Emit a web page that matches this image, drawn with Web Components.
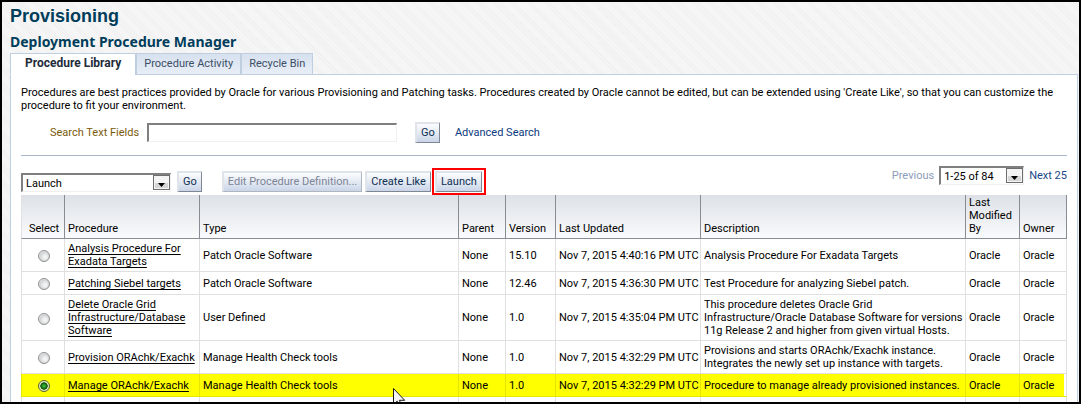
<!DOCTYPE html>
<html lang="en">
<head>
<meta charset="utf-8">
<title>Provisioning</title>
<style>
html, body { height: 100%; margin: 0; }
body { font: 11px/13px Roboto, "Liberation Sans", sans-serif; color: #000; }
</style>
</head>
<body>
<provisioning-page>
  <tab-strip slot="tabs" tabs="Procedure Library|Procedure Activity|Recycle Bin"></tab-strip>
  <search-bar slot="content"></search-bar>
  <action-bar slot="content"></action-bar>
  <procedure-table slot="content"></procedure-table>
</provisioning-page>

<template id="page">
<style>
:host { display: block; box-sizing: border-box; height: 100vh; overflow: hidden; border: 2px solid #000; position: relative;
  background: repeating-linear-gradient(45deg, #f0f0f0 0 1px, #f8f8f8 1px 2px); }
main { display: flex; flex-direction: column; min-height: 100%; box-sizing: border-box; padding: 3px 0 0 8px; }
h1 { margin: 0; font: bold 18px/22px "Liberation Sans", sans-serif; color: #003d5b; }
h2 { margin: 6px 0 2px; font: bold 14px/18px "Noto Sans", sans-serif; color: #003d5b; }
.panel { flex: 1; background: #fff; border: solid #c0cfe0; border-width: 0 1px; padding: 11px 10px 0; margin-right: 1px; }
p { margin: 0 0 10px; }
svg { position: absolute; left: 391px; top: 386px; }
</style>
<main>
  <h1>Provisioning</h1>
  <h2>Deployment Procedure Manager</h2>
  <slot name="tabs"></slot>
  <div class="panel">
    <p>Procedures are best practices provided by Oracle for various Provisioning and Patching tasks. Procedures created by Oracle cannot be edited, but can be extended using 'Create Like', so that you can customize the procedure to fit your environment.</p>
    <slot name="content"></slot>
  </div>
</main>
<svg width="13" height="20" viewBox="0 0 13 20" aria-hidden="true"><path d="M.5.5v16.2l3.7-3.6 2.5 5.8 2.2-1-2.5-5.600h5.300z" fill="#f4f4f8" stroke="#1a1a1a"/></svg>
</template>

<template id="tabs">
<style>
:host { display: block; }
nav { display: flex; border-bottom: 1px solid #c0cfe0; margin-right: 1px; }
a { box-sizing: border-box; height: 22px; line-height: 19px; padding: 0 7px; border: solid #c0cfe0; border-width: 1px 0 1px 2px;
  margin-bottom: -1px; text-align: center; color: #3c4f66; text-decoration: none;
  background: linear-gradient(#d7e1ef, #e8eef7); }
a:last-child { border-right-width: 1px; }
a.on { border-left-width: 1px; border-bottom-color: #fff; padding: 0 14px; font-size: 12px; font-weight: bold; color: #222c3a; background: #fff; }
</style>
<nav></nav>
</template>

<template id="button">
<style>
:host { display: inline-flex; }
button { height: 21px; box-sizing: border-box; padding: 0 4px; font: 11px/16px Roboto, sans-serif; white-space: nowrap; color: #0d2f52; border-radius: 0;
  border: solid; border-width: 2px; border-color: #dfe3ea #7f8794 #7f8794 #dfe3ea; border-right-width: 1px; border-bottom-width: 1px;
  background: linear-gradient(#fbfcfe, #dfe6f1 60%, #c9d4e8); }
button:disabled { color: #7d8496; border-color: #dfe3ea #b0b6c0 #b0b6c0 #dfe3ea; }
</style>
<button type="button"><slot></slot></button>
</template>

<template id="select">
<style>
:host { display: inline-grid; align-items: center; }
select, svg { grid-area: 1 / 1; }
select { appearance: none; width: 100%; height: 19px; box-sizing: border-box; margin: 0; padding: 0 20px 0 3px; border-radius: 0;
  border: solid; border-width: 2px 1px 1px 2px; border-color: #7f7f7f #f0f0f0 #f0f0f0 #7f7f7f; background: #fff;
  font: 11px/15px Roboto, sans-serif; color: #000; }
svg { justify-self: end; margin-right: 1px; pointer-events: none; }
</style>
<select><option></option></select>
<svg width="17" height="15" viewBox="0 0 17 15" aria-hidden="true"><rect x=".5" y=".5" width="16" height="14" fill="#f4f4f4" stroke="#6e6e6e"/><path d="M2 8h13v5H2z" fill="#d6d6d6"/><path d="M5 8h7l-3.500 4z" fill="#000"/></svg>
</template>

<template id="search">
<style>
:host { display: block; border-bottom: 1px solid #a9b7cb; padding: 0 0 12px 29px; margin-bottom: 10px; }
form { display: flex; align-items: center; }
label { color: #7b5b0b; min-width: 89px; margin-right: 8px; white-space: nowrap; }
input { width: 250px; height: 19px; box-sizing: border-box; padding: 0 3px; border: solid; border-width: 2px 1px 1px 2px;
  border-color: #7f7f7f #f0f0f0 #f0f0f0 #7f7f7f; border-radius: 0; font: inherit; }
ora-button { margin: 0 15px 0 18px; }
a { color: #0b3a80; text-decoration: none; }
</style>
<form><label for="q">Search Text Fields</label><input id="q" type="text"><ora-button>Go</ora-button><a href="#advanced">Advanced Search</a></form>
</template>

<template id="actions">
<style>
:host { display: flex; align-items: flex-end; height: 29px; }
ora-button { margin-bottom: 3px; }
.action { width: 150px; margin: 0 6px 3px 0; }
.edit { margin-left: 20px; margin-right: 3px; }
.mark { display: inline-flex; border: 2px solid #f00; padding: 1px 2px 1px 1px; margin-left: 1px; }
.mark ora-button { margin: 0; }
.pager { margin-left: auto; align-self: flex-start; display: flex; align-items: center; gap: 5px; }
.pager ora-select { width: 85px; }
.pager a { color: #1a4788; text-decoration: none; }
.pager span { color: #8d9cb8; }
</style>
<ora-select class="action" label="Action" value="Launch"></ora-select>
<ora-button>Go</ora-button>
<ora-button class="edit" disabled>Edit Procedure Definition...</ora-button>
<ora-button>Create Like</ora-button>
<div class="mark"><ora-button>Launch</ora-button></div>
<div class="pager"><span>Previous</span><ora-select label="Range" value="1-25 of 84"></ora-select><a href="#next">Next 25</a></div>
</template>

<template id="table">
<style>
:host { display: block; }
table { width: 100%; table-layout: fixed; border-spacing: 0; }
th, td { box-sizing: border-box; padding: 3px 0 3px 3px; text-align: left; white-space: nowrap; border: solid #e0e0e0; border-width: 0 1px 1px 0; }
th { padding: 1px 0 3px 3px; vertical-align: bottom; font-weight: normal; border-color: #878c95; }
thead { background: linear-gradient(#dde1e7, #fafbfc); }
tr > :first-child { text-align: center; border-left-width: 1px; border-left-color: #e0e0e0; padding-left: 2px; }
td { height: 23px; }
td:first-child { padding: 0 0 0 2px; }
tr.on td { background: #ff0; border-color: #e6e600; }
tr.on td:last-child { box-shadow: inset -2px 0 #fff; border-right-color: #e0e0e0; }
a { color: #000; text-decoration: underline; text-underline-offset: 2px; text-decoration-skip-ink: none; }
input { appearance: none; display: block; width: 12px; height: 12px; margin: 2px auto 0; border: 1px solid #8f8f8f; border-radius: 50%;
  background: radial-gradient(circle at 60% 60%, #f4f4f4 0 15%, #cfd2d4 60%, #f2f2f2 75%); }
input:checked { border-color: #55602a; background: radial-gradient(circle, #35b335 0 10%, #0a4f0a 48%, #e6ebc8 56%); }
</style>
<table>
  <colgroup></colgroup>
  <thead><tr></tr></thead>
  <tbody></tbody>
</table>
</template>

<script>
class Base extends HTMLElement {
  mount(id) {
    const root = this.attachShadow({ mode: 'open' });
    root.append(document.getElementById(id).content.cloneNode(true));
    return root;
  }
}

customElements.define('ora-button', class extends Base {
  connectedCallback() {
    this.mount('button').querySelector('button').disabled = this.hasAttribute('disabled');
  }
});

customElements.define('ora-select', class extends Base {
  connectedCallback() {
    const root = this.mount('select');
    root.querySelector('select').setAttribute('aria-label', this.getAttribute('label'));
    root.querySelector('option').textContent = this.getAttribute('value');
  }
});

customElements.define('tab-strip', class extends Base {
  connectedCallback() {
    const nav = this.mount('tabs').querySelector('nav');
    this.getAttribute('tabs').split('|').forEach((name, i) => {
      const a = document.createElement('a');
      a.href = '#tab' + (i + 1);
      a.textContent = name;
      if (i === 0) { a.className = 'on'; a.setAttribute('aria-current', 'page'); }
      nav.append(a);
    });
  }
});

customElements.define('search-bar', class extends Base {
  connectedCallback() { this.mount('search'); }
});

customElements.define('action-bar', class extends Base {
  connectedCallback() { this.mount('actions'); }
});

customElements.define('procedure-table', class extends Base {
  connectedCallback() {
    const root = this.mount('table');
    const columns = [['Select', 44], ['Procedure', 135], ['Type', 259], ['Parent', 47], ['Version', 50],
      ['Last Updated', 145], ['Description', 0], ['Last<br>Modified<br>By', 54], ['Owner', 47]];
    const rows = [
      ['Analysis Procedure For<br>Exadata Targets', 'Patch Oracle Software', '15.10', '4:40:16', 'Analysis Procedure For Exadata Targets'],
      ['Patching Siebel targets', 'Patch Oracle Software', '12.46', '4:36:30', 'Test Procedure for analyzing Siebel patch.'],
      ['Delete Oracle Grid<br>Infrastructure/Database<br>Software', 'User Defined', '1.0', '4:35:04', 'This procedure deletes Oracle Grid<br>Infrastructure/Oracle Database Software for versions<br>11g Release 2 and higher from given virtual Hosts.'],
      ['Provision ORAchk/Exachk', 'Manage Health Check tools', '1.0', '4:32:29', 'Provisions and starts ORAchk/Exachk instance.<br>Integrates the newly set up instance with targets.'],
      ['Manage ORAchk/Exachk', 'Manage Health Check tools', '1.0', '4:32:29', 'Procedure to manage already provisioned instances.', true]
    ];
    root.querySelector('colgroup').innerHTML = columns.map(c => c[1] ? `<col style="width:${c[1]}px">` : '<col>').join('');
    root.querySelector('thead tr').innerHTML = columns.map(c => `<th scope="col">${c[0]}</th>`).join('');
    root.querySelector('tbody').innerHTML = rows.map(([name, type, version, time, text, on]) =>
      `<tr${on ? ' class="on"' : ''}><td><input type="radio" name="row" aria-label="${name.replace(/<br>/g, ' ')}"${on ? ' checked' : ''}></td>
      <td><a href="#procedure">${name}</a></td><td>${type}</td><td>None</td><td>${version}</td>
      <td>Nov 7, 2015 ${time} PM UTC</td><td>${text}</td><td>Oracle</td><td>Oracle</td></tr>`).join('') +
      '<tr><td></td><td></td><td></td><td></td><td></td><td></td><td>Procedure for patching</td><td></td><td></td></tr>';
  }
});

customElements.define('provisioning-page', class extends Base {
  connectedCallback() { this.mount('page'); }
});
</script>
</body>
</html>
